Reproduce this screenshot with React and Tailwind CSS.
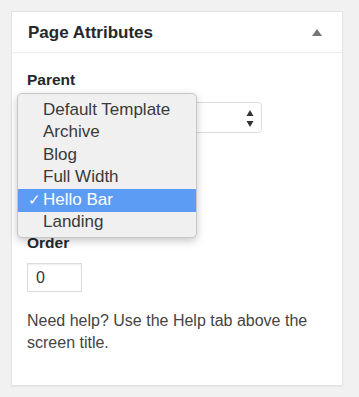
const TEMPLATES = ['Default Template', 'Archive', 'Blog', 'Full Width', 'Hello Bar', 'Landing'];

const App = () => {
  const selected = 'Hello Bar';

  return (
    <div className="min-h-screen bg-[#f1f1f1] pt-[11px] pl-[11px] font-['Liberation_Sans',Arial,sans-serif]">
      <div className="w-[332px] h-[375px] bg-white border border-[#e2e4e7] shadow-[0_1px_1px_rgba(0,0,0,0.04)]">
        {/* Header */}
        <div className="h-[41px] px-[16px] flex items-center justify-between border-b border-[#eeeeee]">
          <h2 className="text-[17px] font-bold text-[#23282d] leading-none">Page Attributes</h2>
          <svg className="w-[10px] h-[7px] mr-[4px]" viewBox="0 0 10 7">
            <path d="M5 0 L10 7 L0 7 Z" fill="#72777c" />
          </svg>
        </div>

        {/* Body */}
        <div className="px-[15px] pt-[17px]">
          <div className="text-[15.5px] font-bold text-[#23282d] leading-[20px]">Parent</div>

          <div className="relative mt-[12px] w-[235px] h-[31px] border border-[#dddddd] rounded-[4px] bg-white">
            <svg className="absolute right-[7px] top-[6px] w-[8px] h-[19px]" viewBox="0 0 8 19">
              <path d="M4 1 L7.5 7 L0.5 7 Z" fill="#333" />
              <path d="M4 18 L7.5 12 L0.5 12 Z" fill="#333" />
            </svg>

            {/* Open dropdown */}
            <div className="absolute left-[-11px] top-[-10px] w-[180px] h-[145px] py-[5px] bg-[#f0f0f0] border border-[#c6c6c6] rounded-[5px] shadow-[0_3px_8px_rgba(0,0,0,0.22)] z-10">
              {TEMPLATES.map((t) => (
                <div
                  key={t}
                  className={`relative h-[22.5px] pl-[25px] pb-[2px] flex items-center text-[17px] leading-none ${
                    t === selected ? 'bg-[#5d9cf5] text-white' : 'text-[#3a3a3a]'
                  }`}
                >
                  {t === selected && (
                    <span className="absolute left-[10px] text-[15px]">✓</span>
                  )}
                  {t}
                </div>
              ))}
            </div>
          </div>

          <div className="mt-[100px] text-[15.5px] font-bold text-[#23282d] leading-[20px]">Order</div>
          <div className="mt-[10px] w-[55px] h-[29px] border border-[#dddddd] shadow-[inset_0_1px_2px_rgba(0,0,0,0.07)] flex items-center pl-[8px] text-[16px] text-[#32373c]">
            0
          </div>

          <p className="mt-[18px] text-[16px] leading-[22px] text-[#444]">
            Need help? Use the Help tab above the screen title.
          </p>
        </div>
      </div>
    </div>
  );
};

export default App;
